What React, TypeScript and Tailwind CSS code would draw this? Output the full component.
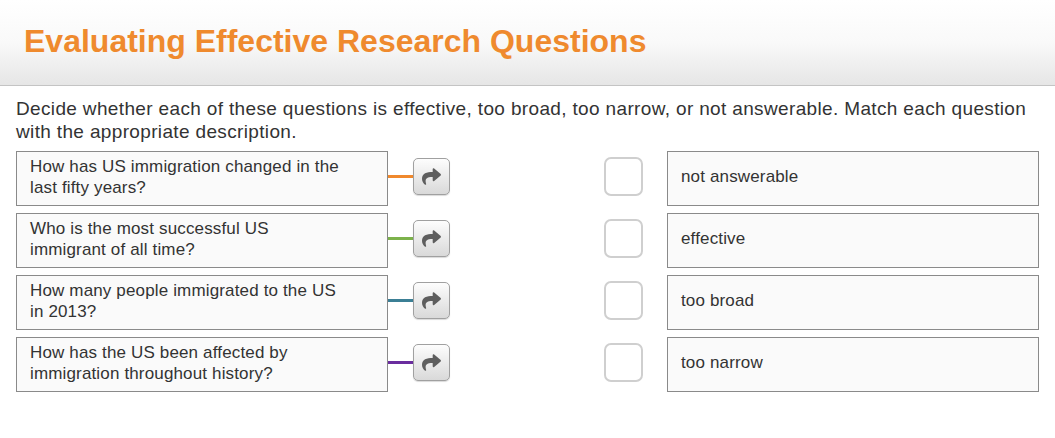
import React from 'react';
import { FaShare } from 'react-icons/fa';

const rows = [
  { q: 'How has US immigration changed in the last fifty years?', color: 'bg-[#f0892d]', a: 'not answerable' },
  { q: 'Who is the most successful US immigrant of all time?', color: 'bg-[#7cb24b]', a: 'effective' },
  { q: 'How many people immigrated to the US in 2013?', color: 'bg-[#3b7f95]', a: 'too broad' },
  { q: 'How has the US been affected by immigration throughout history?', color: 'bg-[#6a2d9e]', a: 'too narrow' },
];

const App = () => {
  return (
    <div className="w-[1055px] h-[438px] bg-white overflow-hidden font-['Liberation_Sans',Arial,sans-serif]">
      <header className="h-[86px] bg-gradient-to-b from-white via-[#f9f9f9] to-[#e6e6e6] border-b border-[#c4c4c4] flex items-center pl-6 pb-[4px]">
        <h1 className="text-[32px] font-bold text-[#ef8a2e] leading-none">Evaluating Effective Research Questions</h1>
      </header>

      <div className="px-4">
        <p className="mt-[11px] text-[19px] leading-[23px] tracking-[0.35px] text-[#333]">
          Decide whether each of these questions is effective, too broad, too narrow, or not answerable. Match each question with the appropriate description.
        </p>

        <div className="mt-[8px] flex flex-col gap-[7px]">
          {rows.map((r, i) => (
            <div key={i} className="flex h-[55px]">
              <div className="w-[372px] h-full border border-[#8a8a8a] bg-[#fafafa] flex items-center pl-[13px] pr-[40px] pb-[3px]">
                <span className="text-[17px] leading-[21px] tracking-[0.15px] text-[#333]">{r.q}</span>
              </div>
              <div className="h-full flex items-center pb-[4px]">
                <div className={`w-[25px] h-[3px] ${r.color}`} />
                <button className="w-[37px] h-[37px] rounded-[5px] border border-[#a0a0a0] bg-gradient-to-b from-[#fdfdfd] to-[#d9d9d9] flex items-center justify-center shadow-[0_1px_1px_rgba(0,0,0,0.15)]">
                  <FaShare className="w-[23px] h-[19px] text-[#5e5e5e]" />
                </button>
                <div className="ml-[154px] w-[39px] h-[39px] rounded-[7px] border-2 border-[#cfcfcf] bg-white" />
              </div>
              <div className="ml-[24px] w-[372px] h-full border border-[#8a8a8a] bg-[#fafafa] flex items-center pl-[13px] pb-[3px]">
                <span className="text-[17px] tracking-[0.15px] text-[#333]">{r.a}</span>
              </div>
            </div>
          ))}
        </div>
      </div>
    </div>
  );
};

export default App;
